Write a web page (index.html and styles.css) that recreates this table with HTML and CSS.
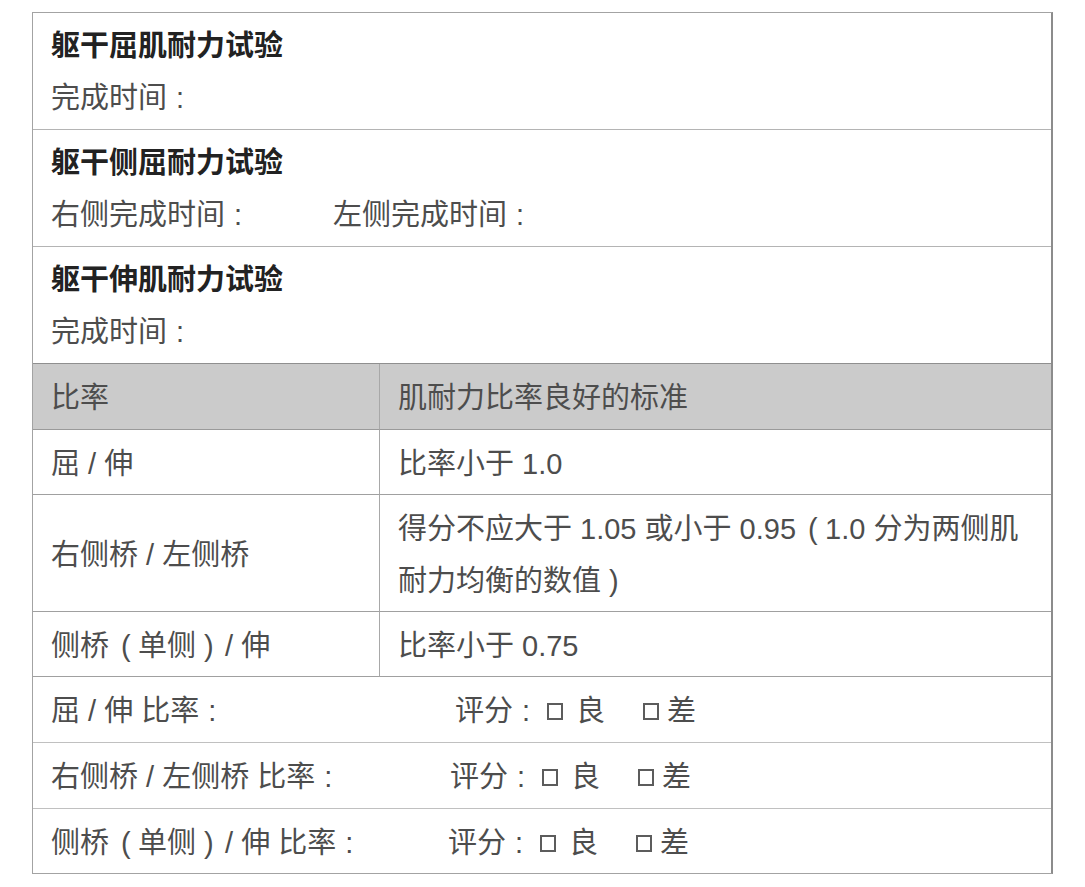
FILE: index.html
```html
<!DOCTYPE html>
<html lang="zh-CN">
<head>
<meta charset="utf-8">
<title>躯干肌耐力试验</title>
<link rel="stylesheet" href="styles.css">
</head>
<body>
<div class="sheet">
  <section class="block">
    <div class="title">躯干屈肌耐力试验</div>
    <div class="line">完成时间<span class="colon">:</span></div>
  </section>
  <section class="block">
    <div class="title">躯干侧屈耐力试验</div>
    <div class="line"><span class="side">右侧完成时间<span class="colon">:</span></span><span>左侧完成时间<span class="colon">:</span></span></div>
  </section>
  <section class="block block--dark">
    <div class="title">躯干伸肌耐力试验</div>
    <div class="line">完成时间<span class="colon">:</span></div>
  </section>
  <div class="ratio-table">
    <div class="cell cell--head cell--left">比率</div>
    <div class="cell cell--head">肌耐力比率良好的标准</div>
    <div class="cell cell--left">屈 / 伸</div>
    <div class="cell">比率小于 1.0</div>
    <div class="cell cell--left">右侧桥 / 左侧桥</div>
    <div class="cell"><span><span class="nowrap">得分不应大于 1.05 或小于 0.95<span class="po">(</span>1.0 分为两侧肌</span><br>耐力均衡的数值<span class="pc">)</span></span></div>
    <div class="cell cell--left"><span>侧桥<span class="po">(</span>单侧<span class="pc">)</span>/ 伸</span></div>
    <div class="cell">比率小于 0.75</div>
  </div>
  <div class="score-row">
    <span class="score-label score-label--wide">屈 / 伸 比率<span class="colon">:</span></span>
    <span class="score">评分<span class="colon">:</span><span class="box"></span>良<span class="box box--second"></span>差</span>
  </div>
  <div class="score-row">
    <span class="score-label score-label--mid">右侧桥 / 左侧桥 比率<span class="colon">:</span></span>
    <span class="score">评分<span class="colon">:</span><span class="box"></span>良<span class="box box--second"></span>差</span>
  </div>
  <div class="score-row score-row--last">
    <span class="score-label">侧桥<span class="po">(</span>单侧<span class="pc">)</span>/ 伸 比率<span class="colon">:</span></span>
    <span class="score">评分<span class="colon">:</span><span class="box"></span>良<span class="box box--second"></span>差</span>
  </div>
</div>
</body>
</html>
```
FILE: styles.css
```css
html, body {
  margin: 0;
  padding: 0;
  background: #ffffff;
}

body {
  font-family: "Liberation Sans", "Noto Sans CJK SC", sans-serif;
  font-size: 29px;
  line-height: 52px;
  color: #4d4d4d;
}

.sheet {
  margin: 12px 0 0 32px;
  width: 1018px;
  border: 1px solid #a3a3a3;
  border-right: 2px solid #8c8c8c;
}

.block {
  padding: 7px 18px 5px;
  border-bottom: 1px solid #b4b4b4;
}

.block--dark {
  border-bottom-color: #8f8f8f;
}

.title {
  font-weight: bold;
  color: #222222;
}

.line {
  display: flex;
}

.side {
  width: 282px;
}

.colon {
  display: inline-block;
  width: 29px;
  padding-left: 9px;
  box-sizing: border-box;
}

.po {
  display: inline-block;
  width: 29px;
  padding-left: 12px;
  box-sizing: border-box;
}

.pc {
  display: inline-block;
  width: 29px;
  padding-left: 8px;
  box-sizing: border-box;
}

.ratio-table {
  display: grid;
  grid-template-columns: 347px 1fr;
}

.cell {
  padding: 8px 8px 4px 18px;
  border-bottom: 1px solid #a0a0a0;
  display: flex;
  align-items: center;
}

.cell--left {
  border-right: 1px solid #a8a8a8;
}

.cell--head {
  background: #cbcbcb;
  border-bottom-color: #9a9a9a;
  padding-bottom: 5px;
}

.nowrap {
  white-space: nowrap;
}

.score-row {
  display: flex;
  align-items: center;
  padding: 8px 18px 5px;
  border-bottom: 1px solid #c0c0c0;
}

.score-row--last {
  border-bottom: none;
  padding-bottom: 4px;
}

.score-label {
  flex: 0 0 auto;
  width: 397px;
}

.score-label--wide {
  width: 404px;
}

.score-label--mid {
  width: 399px;
}

.score {
  flex: 0 0 auto;
  display: flex;
  align-items: center;
}

.box {
  flex: 0 0 16px;
  display: block;
  box-sizing: border-box;
  width: 16px;
  height: 17px;
  border: 2px solid #5c5c5c;
  margin: 1px 13px 0 5px;
}

.box--second {
  margin-left: 38px;
  margin-right: 8px;
}
```
